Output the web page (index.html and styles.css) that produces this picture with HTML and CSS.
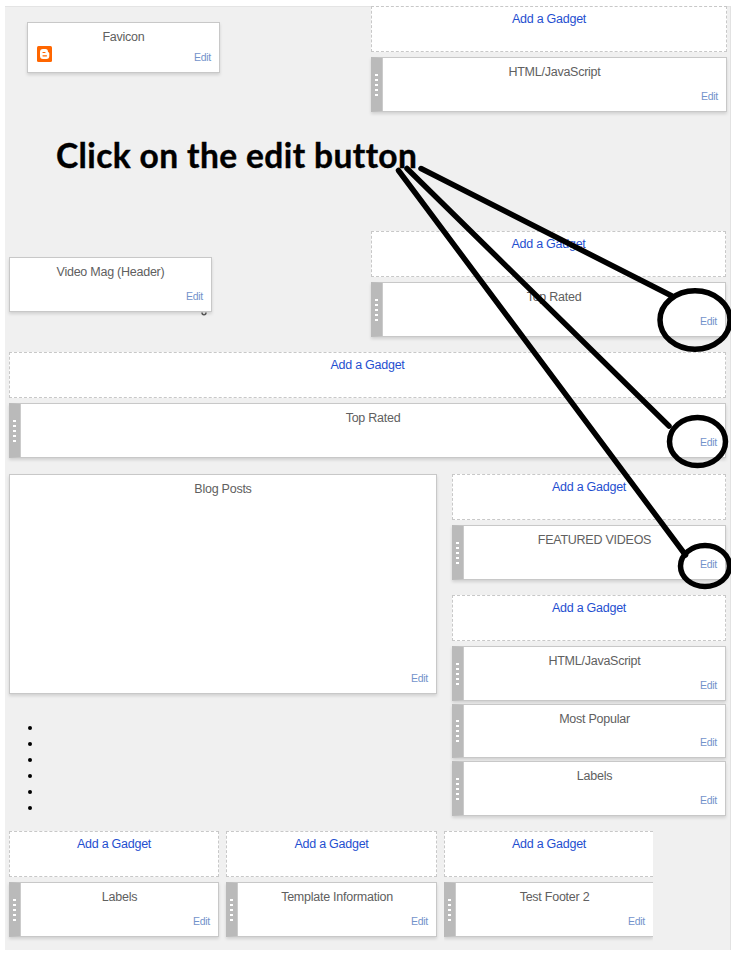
FILE: index.html
```html
<!DOCTYPE html>
<html lang="en">
<head>
<meta charset="utf-8">
<title>Layout</title>
<link rel="stylesheet" href="styles.css">
</head>
<body>
<main class="board">
  <section class="row row-top">
    <div class="card favicon">
      <h3>Favicon</h3>
      <svg class="blogger" viewBox="0 0 15 16"><rect width="15" height="16" rx="1.500" fill="#f60"/><path d="M6 3h2.500Q11 3 11 6q1.300 0 1.300 1.500V10Q12.300 13 9.500 13H6Q3 13 3 10V6Q3 3 6 3Z" fill="#fff"/><path d="M6 6.500h2M6 9.800h3.500" stroke="#f60" stroke-width="1.200" stroke-linecap="round"/></svg>
      <a class="edit">Edit</a>
    </div>
    <div class="stack wide">
      <a class="add">Add a Gadget</a>
      <div class="card grip"><i class="dots"></i><h3>HTML/JavaScript</h3><a class="edit">Edit</a></div>
    </div>
  </section>
  <h1>Click on the edit button</h1>
  <section class="row row-header">
    <div class="card header"><h3>Video Mag (Header)</h3><a class="edit">Edit</a></div>
    <div class="stack">
      <a class="add">Add a Gadget</a>
      <div class="card grip"><i class="dots"></i><h3>Top Rated</h3><a class="edit">Edit</a></div>
    </div>
  </section>
  <section class="stack full">
    <a class="add">Add a Gadget</a>
    <div class="card grip"><i class="dots"></i><h3>Top Rated</h3><a class="edit">Edit</a></div>
  </section>
  <section class="row row-main">
    <div class="primary">
      <div class="card posts"><h3>Blog Posts</h3><a class="edit">Edit</a></div>
      <ul><li></li><li></li><li></li><li></li><li></li><li></li></ul>
    </div>
    <div class="sidebar">
      <div class="stack">
        <a class="add">Add a Gadget</a>
        <div class="card grip"><i class="dots"></i><h3>FEATURED VIDEOS</h3><a class="edit">Edit</a></div>
      </div>
      <div class="stack">
        <a class="add">Add a Gadget</a>
        <div class="cards">
          <div class="card grip"><i class="dots"></i><h3>HTML/JavaScript</h3><a class="edit">Edit</a></div>
          <div class="card grip short"><i class="dots"></i><h3>Most Popular</h3><a class="edit">Edit</a></div>
          <div class="card grip"><i class="dots"></i><h3>Labels</h3><a class="edit">Edit</a></div>
        </div>
      </div>
    </div>
  </section>
  <section class="footer">
    <div class="stack">
      <a class="add">Add a Gadget</a>
      <div class="card grip"><i class="dots"></i><h3>Labels</h3><a class="edit">Edit</a></div>
    </div>
    <div class="stack">
      <a class="add">Add a Gadget</a>
      <div class="card grip"><i class="dots"></i><h3>Template Information</h3><a class="edit">Edit</a></div>
    </div>
    <div class="stack cut">
      <a class="add">Add a Gadget</a>
      <div class="card grip"><i class="dots"></i><h3>Test Footer 2</h3><a class="edit">Edit</a></div>
    </div>
  </section>
</main>
<svg class="marks" viewBox="0 0 731 954" fill="none" stroke="#000" stroke-width="5.500" stroke-linecap="round">
  <path d="M421 168.500 672 296M407 168.500 669 426M398.500 170.500 685.500 555"/>
  <ellipse cx="695" cy="320" rx="35" ry="29.300"/>
  <ellipse cx="697.500" cy="441.500" rx="28" ry="24"/>
  <ellipse cx="705" cy="566" rx="24.500" ry="20.500"/>
  <path d="M202 312.500q0 2.300 2 2.300t2-2.300" stroke="#555" stroke-width="1.500" stroke-linecap="butt"/>
</svg>
</body>
</html>
```
FILE: styles.css
```css
* { box-sizing: border-box; }
body {
  margin: 0;
  height: 954px;
  padding: 6px 0 0 5px;
  position: relative;
  overflow: hidden;
  background: #fff;
  font: 12.5px/14px "Liberation Sans", Arial, sans-serif;
  letter-spacing: -.25px;
}
.board {
  height: 944px;
  padding-left: 4px;
  background: #f0f0f0;
  border-right: 1px solid #e2e2e2;
  box-shadow: inset 0 1px #e4e4e4;
}
.row { display: flex; justify-content: space-between; align-items: flex-start; }
.row-top { height: 106px; padding-right: 3px; }
.row-header { margin-top: 60px; padding-right: 4px; }
.stack { display: flex; flex-direction: column; gap: 5px; width: 355px; }
.wide { width: 356px; }
.full { width: 717px; margin-top: 15px; }
.add {
  display: block;
  height: 46px;
  padding-top: 5px;
  background: #fff;
  border: 1px dashed #c8c8c8;
  color: #1f4fd0;
  text-align: center;
}
.card {
  display: flex;
  flex-direction: column;
  position: relative;
  height: 55px;
  padding: 7px 8px 8px;
  background: #fff;
  border: 1px solid #c8c8c8;
  box-shadow: 0 2px 3px rgba(0, 0, 0, .13);
}
.card h3 { margin: 0; font-size: 12.5px; font-weight: normal; color: #606060; text-align: center; }
.edit { margin-top: auto; align-self: flex-end; font-size: 10.5px; line-height: 13px; color: #7393cb; }
.grip { border-left: 12px solid #bababa; }
.grip::before {
  content: "";
  position: absolute;
  top: 0;
  bottom: 0;
  left: -1px;
  width: 1px;
  background: #cbcbcb;
}
.dots {
  position: absolute;
  left: -8px;
  top: 16px;
  width: 3px;
  height: 22px;
  background: repeating-linear-gradient(#fff 0 2px, transparent 2px 5px);
}
.short { height: 54px; }
.short .dots { top: 15px; }
.favicon { width: 193px; height: 51px; margin: 16px 0 0 18px; }
.blogger { position: absolute; left: 9px; top: 23px; width: 15px; height: 16px; }
h1 {
  margin: 27px 0 0 47px;
  width: 365px;
  height: 32px;
  font: bold 33.5px/33px Lato, sans-serif;
  letter-spacing: .4px;
  -webkit-text-stroke: .4px #000;
  white-space: nowrap;
  color: #000;
}
.header { width: 203px; margin-top: 26px; z-index: 1; }
.row-main { height: 357px; margin-top: 16px; padding-right: 4px; }
.primary { width: 428px; }
.posts { height: 220px; }
ul { margin: 25px 0 0; padding-left: 34px; font-size: 14px; line-height: 16px; }
.sidebar { display: flex; flex-direction: column; gap: 15px; width: 274px; }
.sidebar .stack { width: auto; }
.cards { display: flex; flex-direction: column; gap: 3px; }
.footer { display: grid; grid-template-columns: 210px 211px 209px; gap: 7px; }
.footer .stack { width: auto; }
.cut { overflow: hidden; padding-bottom: 6px; }
.cut .add, .cut .card { border-right: 0; }
.marks { position: absolute; left: 0; top: 0; width: 731px; height: 954px; z-index: 2; }
```
